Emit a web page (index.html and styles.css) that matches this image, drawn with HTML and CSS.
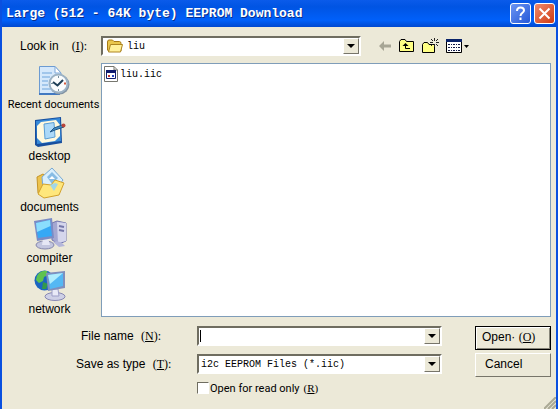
FILE: index.html
```html
<!DOCTYPE html>
<html lang="en">
<head>
    <meta charset="UTF-8">
    <meta name="viewport" content="width=device-width, initial-scale=1.0">
    <title>Large (512 - 64K byte) EEPROM Download</title>
    <link rel="stylesheet" href="styles.css">
</head>
<body>
    <div class="window">
        <header class="title-bar">
            <h1>Large (512 - 64K byte) EEPROM Download</h1>
            <button type="button" class="title-button help" aria-label="Help">
                <svg width="21" height="21" viewBox="0 0 21 21" fill="none" stroke="#fff" stroke-width="2">
                    <path d="M7 8C7 5 9 4.500 10.500 4.500C13 4.500 14 6 14 7.500C14 10 10.500 9.500 10.500 13"/>
                    <path d="M10.500 14.500V17"/>
                </svg>
            </button>
            <button type="button" class="title-button close" aria-label="Close">
                <svg width="21" height="21" viewBox="0 0 21 21" stroke="#fff" stroke-width="2">
                    <path d="M5.500 5.500L15.500 15.500M15.500 5.500L5.500 15.500"/>
                </svg>
            </button>
        </header>

        <form class="dialog">
            <div class="look-row">
                <label class="look-label" for="look-in">Look in <span class="key">(<u>I</u>):</span></label>
                <div class="combo">
                    <svg class="folder" width="16" height="14" viewBox="0 0 16 14">
                        <path d="M.500 11V3Q.500 1 2 1H5.500L7 2.500H12.500Q14 2.500 14 4.500V12H1.500Z" fill="#e9c64c" stroke="#a87b16"/>
                        <path d="M1.500 13L3.500 5.500H15.500L13.500 13Z" fill="#fff09a" stroke="#ad8420"/>
                    </svg>
                    <select id="look-in"><option>liu</option></select>
                    <span class="arrow"></span>
                </div>
                <div class="tools">
                    <button type="button" aria-label="Back" disabled>
                        <svg width="14" height="12" viewBox="0 0 14 12">
                            <path d="M1 6L6 1V4.500H13V7.500H6V11Z" fill="#a7a695"/>
                        </svg>
                    </button>
                    <button type="button" aria-label="Up one level">
                        <svg width="16" height="14" viewBox="0 0 16 14">
                            <path d="M.500 12.500V2.500L2 .500H6L7.500 2.500H14.500V12.500Z" fill="#ffff84" stroke="#000"/>
                            <path d="M6.500 6V9.500H11" fill="none" stroke="#000"/>
                            <path d="M3.500 7L6.500 4L9.500 7Z"/>
                        </svg>
                    </button>
                    <button type="button" aria-label="New folder">
                        <svg width="17" height="16" viewBox="0 0 17 16">
                            <path d="M.500 14.500V6.500L2 4.500H5.500L7 6.500H12.500V14.500Z" fill="#ffff84" stroke="#000"/>
                            <path d="M12.500 0V3M12.500 6V9M8 4.500H11M14 4.500H17M9 1L11 3M16 1L14 3M14 6L16 8M9 8L11 6" stroke="#222"/>
                        </svg>
                    </button>
                    <button type="button" aria-label="View menu">
                        <svg width="24" height="14" viewBox="0 0 24 14">
                            <path d="M.500 .500H15.500V13.500H.500Z" fill="#fff" stroke="#000"/>
                            <path d="M0 0H16V3H0Z" fill="#0a246a"/>
                            <path d="M2 5.500H14M2 8.500H14M2 11.500H14" stroke="#111a46" stroke-dasharray="2 1 1 1"/>
                            <path d="M18 6H23L20.500 9Z"/>
                        </svg>
                    </button>
                </div>
            </div>

            <div class="browser">
                <nav class="places">
                    <a href="#recent" class="small">
                        <svg width="32" height="32" viewBox="0 0 32 32">
                            <path d="M1.500 1.500H17L23 8V28.500H1.500Z" fill="#d5e8fb" stroke="#6c9bd2"/>
                            <path d="M1 28H22V30H1Z" fill="#4279c1"/>
                            <path d="M17 1.500V8H23Z" fill="#fff" stroke="#7fa8d8"/>
                            <path d="M4 8H14M4 12H12M4 16H10M4 20H10M4 24H13" stroke="#a1c6eb" stroke-width="2"/>
                            <circle cx="21.500" cy="19.500" r="10" fill="#8394a4"/>
                            <circle cx="20.500" cy="18.500" r="9" fill="#fafcfd" stroke="#9cb2c4" stroke-width="2"/>
                            <path d="M20.500 11V13M20.500 24V26M13 18.500H15" stroke="#78909f"/>
                            <path d="M26 18.500H28" stroke="#d45b3e" stroke-width="2"/>
                            <path d="M15 17L19.500 20.500L25 15" fill="none" stroke="#1e3e56" stroke-width="2"/>
                        </svg>
                        Recent documents
                    </a>
                    <a href="#desktop">
                        <svg width="32" height="32" viewBox="0 0 32 32">
                            <path d="M1 4L27 1L28 27L4 31L1 29Z" fill="#174f9f"/>
                            <path d="M2 5L26 2L27 25L3 28Z" fill="#388bd9"/>
                            <path d="M7 6L22 4L26 9V20L21 25L8 27L3 22V10Z" fill="#fff9de"/>
                            <path d="M10 8L20 6.500L21 21L11 23Z" fill="#acd9f8" stroke="#5a9ed4"/>
                            <path d="M16 16L20 12L28 9L30 11L21 14Z" fill="#428bc0" stroke="#1e5689"/>
                            <circle cx="29.500" cy="9.500" r="2" fill="#b9453b"/>
                        </svg>
                        desktop
                    </a>
                    <a href="#documents">
                        <svg width="32" height="32" viewBox="0 0 32 32">
                            <path d="M3 10L9 7L13 10V28L4 26Z" fill="#edc34d" stroke="#c49428"/>
                            <path d="M8 10L18 1L29 13L19 26L9 22Z" fill="#d9effd" stroke="#78a9d2"/>
                            <path d="M13 10L18 5L24 11L18 17Z" fill="#87bce4"/>
                            <path d="M15 12L18 9L21 12Z" fill="#fff"/>
                            <path d="M4 27L9 17L17 18L21 13L30 16L25 28L10 31Z" fill="#ffe77c" stroke="#d2a12c"/>
                            <path d="M16 18L21 16L24 17L20 24Z" fill="#a2d7e8"/>
                        </svg>
                        documents
                    </a>
                    <a href="#computer">
                        <svg width="34" height="32" viewBox="0 0 34 32">
                            <path d="M19 5L24 3L33 5V23L26 26L19 22Z" fill="#a4a7d1" stroke="#7578af"/>
                            <path d="M24 4L33 5V23L25 25Z" fill="#d5d6ec"/>
                            <path d="M26 8L31 9M26 12L31 13" stroke="#7376a8" stroke-width="2"/>
                            <ellipse cx="12" cy="27" rx="9" ry="4" fill="#c3c6df" stroke="#8385ab"/>
                            <path d="M10 20H15L17 27H9Z" fill="#e6e7f5"/>
                            <path d="M1 3L19 0L21 20L4 23Z" fill="#7a8bc5"/>
                            <path d="M3 5L17 2L19 18L5 20Z" fill="#36a8f5"/>
                            <path d="M3 5L17 2L17.500 8L4 14Z" fill="#8bddfd"/>
                            <path d="M20 24Q24 22 29 25L32 28L26 29Z" fill="#b4b6da"/>
                        </svg>
                        compiter
                    </a>
                    <a href="#network">
                        <svg width="32" height="32" viewBox="0 0 32 32">
                            <circle cx="10.500" cy="11.500" r="10" fill="#1b65c1"/>
                            <path d="M5 4Q9 1 13 2L14 6L10 8L9 12L5 14L2 11Q2 7 5 4Z" fill="#5ec250"/>
                            <path d="M9 13L14 15L12 20L8 20Z" fill="#32994b"/>
                            <ellipse cx="21" cy="27.500" rx="10" ry="4" fill="#ced0e6" stroke="#8989b4"/>
                            <path d="M18 20H24L25 27H18Z" fill="#e9eaf7" stroke="#9d9fc7"/>
                            <path d="M12 4L31 2V19L14 22Z" fill="#7f8fbd"/>
                            <path d="M14 6L29 4V17L16 20Z" fill="#54b8f4"/>
                            <path d="M14 6L29 4L16 15Z" fill="#b0edfd"/>
                        </svg>
                        network
                    </a>
                </nav>
                <ul class="file-list">
                    <li>
                        <svg width="14" height="16" viewBox="0 0 14 16">
                            <path d="M.500 .500H10L13.500 4V15.500H.500Z" fill="#fff" stroke="#77776f"/>
                            <path d="M10 .500V4H13.500" fill="none" stroke="#77776f"/>
                            <path d="M2.500 4.500H11.500V12.500H2.500Z" fill="#fff" stroke="#101c6d"/>
                            <path d="M2 4H12V7H2Z" fill="#101c6d"/>
                            <path d="M4 10H6" stroke="#c23434" stroke-width="2"/>
                            <path d="M8 10H10" stroke="#2647bd" stroke-width="2"/>
                        </svg>
                        liu.iic
                    </li>
                </ul>
            </div>

            <div class="bottom">
                <div class="fields">
                    <label for="file-name" class="name-label">File name <span class="key">(<u>N</u>):</span></label>
                    <div class="combo">
                        <input type="text" id="file-name" autofocus>
                        <span class="arrow"></span>
                    </div>
                    <label for="file-type">Save as type <span class="key">(<u>T</u>):</span></label>
                    <div class="combo">
                        <select id="file-type"><option>i2c EEPROM Files (*.iic)</option></select>
                        <span class="arrow"></span>
                    </div>
                    <label class="read-only"><input type="checkbox">Open for read only <span class="key">(<u>R</u>)</span></label>
                </div>
                <div class="actions">
                    <button type="submit" class="default">Open· <span class="key">(<u>O</u>)</span></button>
                    <button type="button">Cancel</button>
                </div>
            </div>
        </form>
        <svg class="grip" width="12" height="12" viewBox="0 0 12 12" stroke="#aaa995" stroke-width="2">
            <path d="M0 12L12 0M4 12L12 4M8 12L12 8"/>
        </svg>
    </div>
</body>
</html>
```

FILE: styles.css
```css
* {
    box-sizing: border-box;
}
body {
    margin: 0;
    background-color: #ece9d8;
    font-family: "Liberation Sans", Arial, sans-serif;
    font-size: 12px;
    color: #000;
}
svg {
    display: block;
    flex: none;
}
.window {
    position: relative;
    display: flex;
    flex-direction: column;
    min-height: 100vh;
    border: 2px solid #0a50e0;
    border-width: 0 2px;
}
.title-bar {
    display: flex;
    align-items: center;
    gap: 3px;
    height: 27px;
    padding: 0 1px 0 4px;
    background: linear-gradient(#0a5bea, #0054e3 25%, #0060fa 75%, #0048cf);
}
h1 {
    flex: 1;
    margin: 0;
    font-family: "Liberation Mono", monospace;
    font-size: 13px;
    font-weight: bold;
    white-space: nowrap;
    color: #fff;
    text-shadow: 1px 1px #0a2f8c;
}
.title-button {
    width: 21px;
    height: 21px;
    padding: 0;
    border: 1px solid #fff;
    border-radius: 3px;
}
.title-button svg {
    margin: -1px;
}
.help {
    background: linear-gradient(135deg, #6c95f2, #2458d8);
}
.close {
    background: linear-gradient(135deg, #f08a6c, #cf3a12);
}
.dialog {
    flex: 1;
    display: flex;
    flex-direction: column;
    padding: 9px 5px 15px 0;
}
.key {
    font-family: "Liberation Serif", serif;
}
.look-row {
    display: flex;
    align-items: center;
}
.look-label {
    display: flex;
    gap: 13px;
    width: 99px;
    padding-left: 18px;
}
.combo {
    position: relative;
    display: flex;
    align-items: center;
    height: 20px;
    border: 2px solid #6f6d60;
    border-right-color: #fff;
    border-bottom-color: #fff;
    background-color: #fff;
}
.look-row .combo {
    flex: 0 1 260px;
}
.folder {
    margin: 0 2px 0 4px;
}
.combo select,
.combo input {
    flex: 1;
    min-width: 0;
    height: 16px;
    padding: 0 18px 0 2px;
    border: none;
    outline: none;
    appearance: none;
    background: transparent;
    font-family: "Liberation Mono", monospace;
    font-size: 10px;
    color: #000;
}
/* steady caret in the name field */
.combo input:focus {
    caret-color: transparent;
    background: linear-gradient(#000, #000) 1px 2px / 1px 12px no-repeat;
}
.arrow {
    position: absolute;
    top: 0;
    right: 0;
    bottom: 0;
    display: grid;
    place-items: center;
    width: 16px;
    border: 1px solid #fff;
    border-right-color: #77756a;
    border-bottom-color: #77756a;
    background-color: #ece9d8;
    pointer-events: none;
}
.arrow::after {
    content: "";
    border: 4px solid transparent;
    border-top-color: #000;
    border-bottom: none;
}
.tools {
    display: flex;
    align-items: center;
    gap: 7px;
    margin-left: 17px;
}
.tools button {
    padding: 0;
    border: none;
    background: none;
}
.browser {
    flex: 1;
    display: flex;
    margin-top: 7px;
}
.places {
    width: 99px;
    padding: 2px 4px 0 0;
}
.places a {
    display: flex;
    flex-direction: column;
    align-items: center;
    line-height: 16px;
    white-space: nowrap;
    text-decoration: none;
    color: #000;
}
.places a + a {
    margin-top: 3px;
}
.places .small {
    font-family: Roboto, sans-serif;
    font-size: 11px;
    padding-left: 8px;
}
.file-list {
    flex: 1;
    margin: 0;
    padding: 2px;
    border: 1px solid #7f9db9;
    background-color: #fff;
    list-style: none;
    font-family: "Liberation Mono", monospace;
    font-size: 10px;
}
.file-list li {
    display: flex;
    align-items: center;
    gap: 2px;
}
.bottom {
    display: flex;
    justify-content: space-between;
    margin-top: 9px;
}
.fields {
    flex: 0 1 440px;
    display: grid;
    grid-template-columns: 121px 1fr;
    row-gap: 8px;
    align-items: center;
    padding-left: 74px;
}
.fields label .key {
    margin-left: 4px;
}
.name-label {
    padding-left: 5px;
}
.fields .read-only {
    grid-column: 2;
    display: flex;
    align-items: center;
    height: 12px;
    font-family: Roboto, sans-serif;
    font-size: 11px;
}
.read-only input {
    width: 12px;
    height: 12px;
    margin: 0 1px 0 0;
    border: 1px solid #6f6d60;
    border-right-color: #fff;
    border-bottom-color: #fff;
    appearance: none;
    background-color: #fff;
}
.read-only input:checked {
    background-color: #316ac5;
}
.actions {
    display: flex;
    flex-direction: column;
    gap: 3px;
}
.actions button {
    width: 76px;
    height: 24px;
    padding: 0 0 2px 9px;
    border: 1px solid #fff;
    border-right-color: #77756a;
    border-bottom-color: #77756a;
    background-color: #ece9d8;
    font-family: inherit;
    font-size: 12px;
    text-align: left;
    color: #000;
}
.actions .default {
    border-color: #000;
    box-shadow: inset 1px 1px #fff, inset -1px -1px #88867a;
    padding-left: 6px;
}
.grip {
    position: absolute;
    right: 0;
    bottom: 0;
}
```
